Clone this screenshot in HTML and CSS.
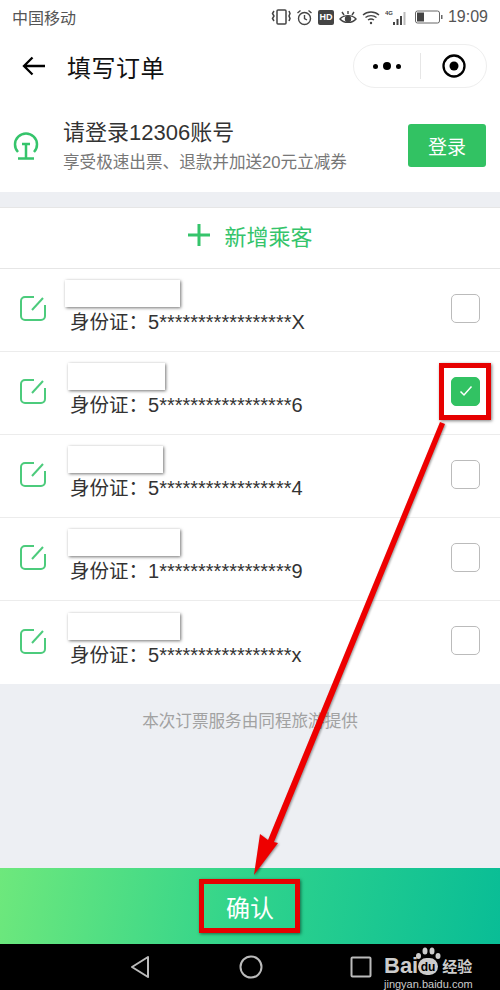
FILE: index.html
```html
<!DOCTYPE html>
<html lang="zh-CN">
<head>
  <meta charset="UTF-8" />
  <meta name="viewport" content="width=device-width, initial-scale=1" />
  <title>填写订单</title>
  <link rel="stylesheet" href="styles.css">
</head>
<body>
  <div class="phone">
    <div class="status-bar">
      <span class="carrier">中国移动</span>
      <div class="status-icons">
        <svg width="20" height="18" viewBox="0 0 20 18" fill="none" stroke="#444" stroke-width="1.5"><rect x="6" y="2" width="9" height="14" rx="1"/><path d="M3 3L1.5 5.5 3 8 1.500 10.500 3 13M18 3l1 2.500L18 8l1 2.500L18 13"/></svg>
        <svg width="17" height="17" viewBox="0 0 17 17" fill="none" stroke="#444" stroke-width="1.4"><circle cx="8.500" cy="9.500" r="6"/><path d="M8.500 6v3.500l2.500 1.500M1.500 4L4.500 1.500M15.500 4L12.500 1.500"/></svg>
        <span class="hd">HD</span>
        <svg width="18" height="15" viewBox="0 0 18 15" fill="none" stroke="#444" stroke-width="1.4"><path d="M1 9c3.500-4.500 12.500-4.500 16 0-3.500 4.500-12.500 4.500-16 0zM3 2l2 3M9 1v3M15 2l-2 3"/><circle cx="9" cy="9" r="2.500" fill="#444"/></svg>
        <svg width="18" height="15" viewBox="0 0 18 15" fill="none" stroke="#444" stroke-width="1.4"><path d="M1 5c4.500-4 11.500-4 16 0M3.500 7.500c3-2.500 8-2.500 11 0M6 10c1.800-1.300 4.200-1.300 6 0"/><circle cx="9" cy="13" r="1.200" fill="#444" stroke="none"/></svg>
        <svg class="signal" width="24" height="17" viewBox="0 0 24 17" fill="#444"><rect x="8" y="13" width="2" height="3"/><rect x="11.500" y="10" width="2" height="6"/><rect x="15" y="7" width="2" height="9"/><rect x="18.500" y="3" width="2" height="13" fill="#bbb"/><text x="0" y="6" class="signal-text">4G</text></svg>
        <svg class="battery" width="28" height="14" viewBox="0 0 28 14" fill="none"><rect x="0.500" y="1" width="24" height="12" rx="2" stroke="#666"/><rect x="2" y="2.500" width="7" height="9" fill="#444"/><rect x="26" y="5" width="1.500" height="4" fill="#666"/></svg>
        <span class="time">19:09</span>
      </div>
    </div>

    <div class="nav-bar">
      <svg class="back-icon" width="24" height="20" viewBox="0 0 24 20" fill="none" stroke="#000" stroke-width="2.300"><path d="M23 10H2M10.500 1.500L2 10l8.500 8.500"/></svg>
      <h1>填写订单</h1>
      <div class="capsule">
        <div class="capsule-dots"><i></i><b></b><i></i></div>
        <span class="capsule-line"></span>
        <svg width="26" height="26" viewBox="0 0 26 26"><circle cx="13" cy="13" r="10.500" fill="none" stroke="#000" stroke-width="2.300"/><circle cx="13" cy="13" r="4.500"/></svg>
      </div>
    </div>

    <div class="login-row">
      <svg class="rail-icon" width="28" height="30" viewBox="0 0 28 30" fill="none" stroke="#35c46b" stroke-width="2.500"><path d="M6 21a11 11 0 1 1 16 0"/><path d="M10 13h8M14 13v14M6 27.500h16"/></svg>
      <div class="login-text">
        <div class="login-title">请登录12306账号</div>
        <div class="login-sub">享受极速出票、退款并加送20元立减券</div>
      </div>
      <button class="login-btn">登录</button>
    </div>

    <div class="add-row">
      <svg width="24" height="24" viewBox="0 0 24 24" stroke="#35c46b" stroke-width="3"><path d="M1 12h22M12 1v22"/></svg>
      <span>新增乘客</span>
    </div>

    <div class="list">
      <div class="passenger">
        <svg class="edit-icon" width="28" height="28" viewBox="0 0 28 28" fill="none" stroke="#4ccb7c" stroke-width="2"><path d="M15 3H6a4 4 0 0 0-4 4v15a4 4 0 0 0 4 4h16a4 4 0 0 0 4-4V11"/><path d="M13 16L24 4"/></svg>
        <div class="info">
          <div class="mask mask-1"></div>
          <div class="id-line"><span class="id-label">身份证：</span>5*****************X</div>
        </div>
        <span class="checkbox"></span>
      </div>
      <div class="passenger">
        <svg class="edit-icon" width="28" height="28" viewBox="0 0 28 28" fill="none" stroke="#4ccb7c" stroke-width="2"><path d="M15 3H6a4 4 0 0 0-4 4v15a4 4 0 0 0 4 4h16a4 4 0 0 0 4-4V11"/><path d="M13 16L24 4"/></svg>
        <div class="info">
          <div class="mask mask-2"></div>
          <div class="id-line"><span class="id-label">身份证：</span>5*****************6</div>
        </div>
        <span class="checkbox checked">
          <svg width="14" height="12" viewBox="0 0 14 12" fill="none" stroke="#fff" stroke-width="1.500"><path d="M1.500 6.500L5 10l7.500-8.500"/></svg>
        </span>
      </div>
      <div class="passenger">
        <svg class="edit-icon" width="28" height="28" viewBox="0 0 28 28" fill="none" stroke="#4ccb7c" stroke-width="2"><path d="M15 3H6a4 4 0 0 0-4 4v15a4 4 0 0 0 4 4h16a4 4 0 0 0 4-4V11"/><path d="M13 16L24 4"/></svg>
        <div class="info">
          <div class="mask mask-3"></div>
          <div class="id-line"><span class="id-label">身份证：</span>5*****************4</div>
        </div>
        <span class="checkbox"></span>
      </div>
      <div class="passenger">
        <svg class="edit-icon" width="28" height="28" viewBox="0 0 28 28" fill="none" stroke="#4ccb7c" stroke-width="2"><path d="M15 3H6a4 4 0 0 0-4 4v15a4 4 0 0 0 4 4h16a4 4 0 0 0 4-4V11"/><path d="M13 16L24 4"/></svg>
        <div class="info">
          <div class="mask mask-4"></div>
          <div class="id-line"><span class="id-label">身份证：</span>1*****************9</div>
        </div>
        <span class="checkbox"></span>
      </div>
      <div class="passenger">
        <svg class="edit-icon" width="28" height="28" viewBox="0 0 28 28" fill="none" stroke="#4ccb7c" stroke-width="2"><path d="M15 3H6a4 4 0 0 0-4 4v15a4 4 0 0 0 4 4h16a4 4 0 0 0 4-4V11"/><path d="M13 16L24 4"/></svg>
        <div class="info">
          <div class="mask mask-4"></div>
          <div class="id-line"><span class="id-label">身份证：</span>5*****************x</div>
        </div>
        <span class="checkbox"></span>
      </div>
    </div>

    <div class="provider">本次订票服务由同程旅游提供</div>

    <div class="confirm-bar">确认</div>

    <div class="system-nav">
      <svg width="24" height="26" viewBox="0 0 24 26" fill="none" stroke="#bbb" stroke-width="2"><path d="M20 3L4 13l16 10z" stroke-linejoin="round"/></svg>
      <svg width="24" height="24" viewBox="0 0 24 24" fill="none" stroke="#bbb" stroke-width="2"><circle cx="12" cy="12" r="10.500"/></svg>
      <svg width="22" height="22" viewBox="0 0 22 22" fill="none" stroke="#bbb" stroke-width="2"><rect x="1.500" y="1.500" width="19" height="19" rx="1"/></svg>
    </div>

    <!-- annotation layer, sits over the page -->
    <div class="mark mark-check"></div>
    <div class="mark mark-confirm"></div>
    <svg class="arrow" width="500" height="990" viewBox="0 0 500 990"><path d="M440 422L445 424L274 842L278 843L254 875L260 834L268 840z" fill="#ee0000"/></svg>

    <div class="watermark">
      <div class="wm-top">
        <span class="wm-bai">Bai</span>
        <svg class="wm-paw" width="26" height="30" viewBox="0 0 26 30" fill="#ccc">
          <ellipse cx="3.500" cy="9" rx="2.500" ry="3"/>
          <ellipse cx="10" cy="4" rx="2.500" ry="3.500"/>
          <ellipse cx="17" cy="4" rx="2.500" ry="3.500"/>
          <ellipse cx="23" cy="9" rx="2.500" ry="3"/>
          <rect x="3" y="11" width="20" height="17" rx="8.500"/>
          <text x="13" y="24" class="wm-du">du</text>
        </svg>
        <span class="wm-jy">经验</span>
      </div>
      <div class="wm-url">jingyan.baidu.com</div>
    </div>
  </div>
</body>
</html>
```

FILE: styles.css
```css
* {
  box-sizing: border-box;
}

body {
  margin: 0;
  font-family: "Liberation Sans", "Noto Sans CJK SC", sans-serif;
  color: #333;
}

.phone {
  position: relative;
  width: 500px;
  height: 990px;
  display: flex;
  flex-direction: column;
  background: #edeff3;
  overflow: hidden;
}

/* status bar */
.status-bar {
  height: 34px;
  background: #fff;
  display: flex;
  align-items: center;
  justify-content: space-between;
  padding: 0 12px;
  color: #555;
}

.carrier {
  font-size: 16px;
}

.status-icons {
  display: flex;
  align-items: center;
  gap: 5px;
}

.hd {
  background: #444;
  color: #fff;
  font-size: 9px;
  font-weight: 700;
  width: 16px;
  height: 15px;
  border-radius: 2px;
  display: flex;
  align-items: center;
  justify-content: center;
}

.signal-text {
  font-size: 6px;
  font-weight: 700;
}

.battery {
  margin-left: 1px;
}

.time {
  font-size: 16px;
}

/* title bar */
.nav-bar {
  height: 66px;
  background: #fff;
  display: flex;
  align-items: center;
  padding: 0 13px 2px 22px;
}

.back-icon {
  margin-right: 21px;
}

.nav-bar h1 {
  margin: 0;
  flex: 1;
  font-size: 24px;
  font-weight: 400;
  color: #111;
  letter-spacing: 0.5px;
}

.capsule {
  width: 134px;
  height: 44px;
  border: 1px solid #eee;
  border-radius: 22px;
  display: flex;
  align-items: center;
  padding-left: 19px;
}

.capsule-dots {
  width: 28px;
  display: flex;
  align-items: center;
  justify-content: space-between;
}

.capsule-dots i {
  width: 5px;
  height: 5px;
  border-radius: 50%;
  background: #000;
}

.capsule-dots b {
  width: 8px;
  height: 8px;
  border-radius: 50%;
  background: #000;
}

.capsule-line {
  width: 1px;
  height: 26px;
  background: #e6e6e6;
  margin: 0 20px 0 19px;
}

/* 12306 login */
.login-row {
  height: 92px;
  background: #fff;
  display: flex;
  align-items: center;
  padding: 0 14px 0 12px;
  margin-bottom: 15px;
}

.rail-icon {
  margin-right: 23px;
}

.login-text {
  flex: 1;
}

.login-title {
  font-size: 22px;
  line-height: 30px;
  color: #333;
}

.login-sub {
  font-size: 16.6px;
  line-height: 24px;
  color: #777;
  margin-top: 3px;
}

.login-btn {
  width: 78px;
  height: 43px;
  border: none;
  border-radius: 3px;
  background: #32c263;
  color: #fff;
  font-family: inherit;
  font-size: 19px;
  margin-top: -1px;
}

/* add passenger */
.add-row {
  height: 62px;
  background: #fff;
  border-top: 1px solid #e6e6e6;
  border-bottom: 1px solid #e6e6e6;
  display: flex;
  align-items: center;
  justify-content: center;
  gap: 13px;
  padding-bottom: 6px;
  color: #35c46b;
  font-size: 22px;
}

/* passengers */
.passenger {
  height: 83px;
  background: #fff;
  border-bottom: 1px solid #ececec;
  display: flex;
  align-items: center;
  padding: 0 20px 0 19px;
}

.passenger:last-child {
  border-bottom: none;
}

.edit-icon {
  margin: -4px 18px 0 0;
  flex: none;
}

.info {
  flex: 1;
  margin-bottom: 12px;
}

.mask {
  height: 27px;
  background: #fff;
  box-shadow: 1px 1px 3px rgba(0, 0, 0, 0.55);
}

.mask-1 {
  width: 115px;
}

.mask-2 {
  width: 97px;
  margin-left: 3px;
}

.mask-3 {
  width: 95px;
  margin-left: 3px;
}

.mask-4 {
  width: 112px;
  margin-left: 3px;
}

.id-line {
  font-size: 20px;
  line-height: 24px;
  color: #333;
  margin: 3px 0 -6px 5px;
}

.id-label {
  font-size: 19.5px;
}

.checkbox {
  width: 29px;
  height: 29px;
  margin-top: -4px;
  border: 1.5px solid #bbb;
  border-radius: 5px;
  background: #fff;
  display: flex;
  align-items: center;
  justify-content: center;
}

.checkbox.checked {
  background: #32c263;
  border-color: #32c263;
}

.provider {
  flex: 1;
  padding-top: 27px;
  text-align: center;
  font-size: 16.6px;
  line-height: 22px;
  color: #a2a2a2;
}

/* bottom */
.confirm-bar {
  height: 76px;
  background: linear-gradient(100deg, #6ee87c 0%, #2fd38c 50%, #09bd96 100%);
  color: #fff;
  font-size: 24px;
  display: flex;
  align-items: center;
  justify-content: center;
}

.system-nav {
  height: 46px;
  background: #000;
  display: flex;
  align-items: center;
  padding-left: 128px;
  gap: 87px;
}

/* red annotation */
.mark {
  position: absolute;
  border: 5px solid #e60000;
  box-shadow: 1px 1px 3px rgba(0, 0, 0, 0.5);
}

.mark-check {
  left: 439px;
  top: 363px;
  width: 52px;
  height: 57px;
}

.mark-confirm {
  left: 199px;
  top: 879px;
  width: 101px;
  height: 54px;
}

.arrow {
  position: absolute;
  left: 0;
  top: 0;
  pointer-events: none;
  filter: drop-shadow(1px 1px 1px rgba(0, 0, 0, 0.4));
}

/* baidu watermark */
.watermark {
  position: absolute;
  left: 384px;
  top: 946px;
  color: #ccc;
}

.wm-top {
  display: flex;
  align-items: flex-end;
  height: 30px;
}

.wm-bai {
  font-size: 22px;
  font-weight: 700;
  line-height: 18px;
  margin-bottom: 1px;
}

.wm-paw {
  margin: 0 0 -1px -3px;
}

.wm-du {
  font-size: 12px;
  font-weight: 700;
  fill: #000;
  text-anchor: middle;
}

.wm-jy {
  font-size: 15px;
  font-weight: 700;
  line-height: 18px;
  margin-left: 1px;
}

.wm-url {
  font-size: 11px;
  line-height: 12px;
  margin-top: 2px;
}
```
